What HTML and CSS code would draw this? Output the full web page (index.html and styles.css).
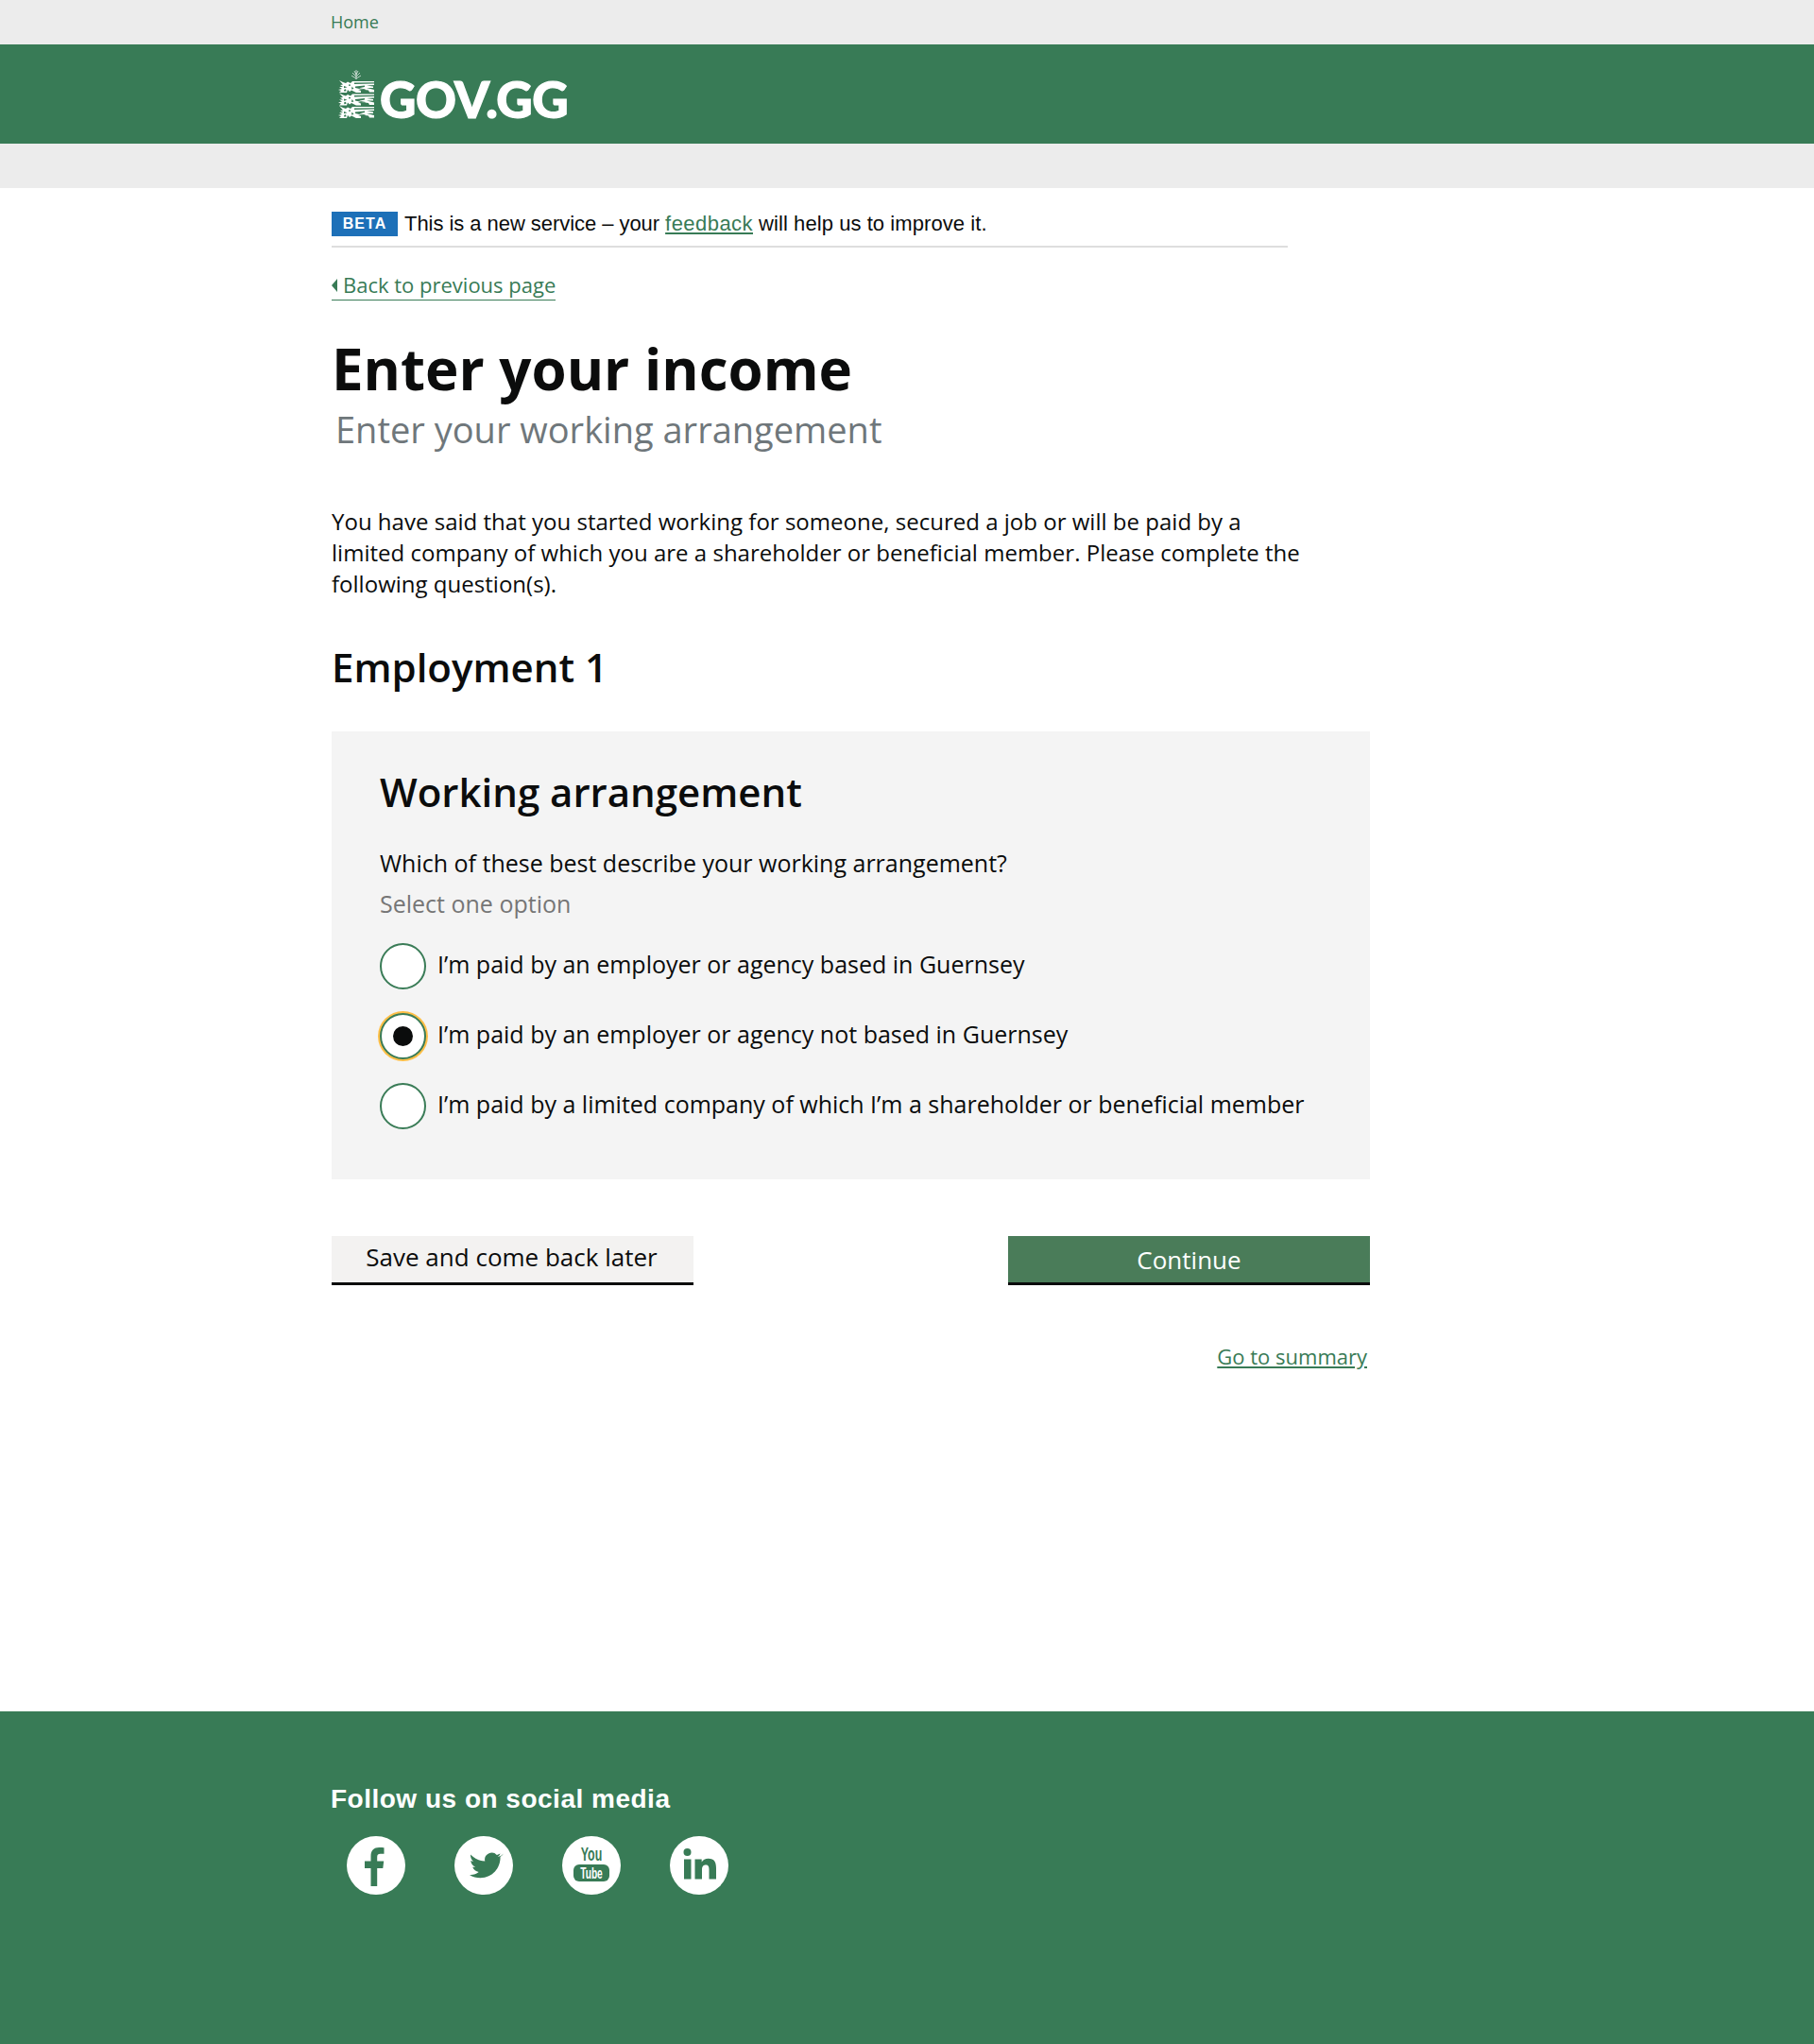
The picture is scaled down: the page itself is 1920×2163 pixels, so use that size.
FILE: index.html
```html
<!DOCTYPE html>
<html lang="en">
<head>
<meta charset="utf-8">
<title>Enter your income</title>
<link rel="stylesheet" href="styles.css">
</head>
<body>
<header>
  <div class="topbar"><div class="wrap"><a class="home" href="#">Home</a></div></div>
  <div class="brand"><div class="wrap brand-in">
    <svg class="crest" viewBox="0 0 38 52" aria-hidden="true">
      <defs>
        <g id="lion">
          <path fill="#fff" d="M1 0L5 2 8 3 10 1.500 13 3 15 1H38V2.200L17 2.500V4L38 3.500V5L30 5.500 37 6.500V8H30L38 10V12.500H33L32 10.500 24 9.500 21 10 24 11V13H19L14 10.500 12 12 10 10 9 13H1L3 11 0 10 4 9 1 7H5L2 5 5 4.500Z"/>
          <path fill="#387b56" d="M11 4.500h2v1.200h-2zM18 6.500l10-1v1.500l-6 1.200 7 1.300-1 .7-10-2.200zM6 6l3.500 1.200L6 8.200zM14.500 6.500l2 2.500-2.500 .5zM6 10l2-.8.5 2-2 .6z"/>
        </g>
      </defs>
      <g stroke="#fff" stroke-width=".8" fill="none" opacity=".85">
        <path d="M19 11V1M19 8l-4-4M19 8l4-4M19 10l-5-3M19 10l5-3M19 6l-2-4M19 6l2-4"/>
      </g>
      <use href="#lion" y="12"/>
      <use href="#lion" y="25.500"/>
      <use href="#lion" y="39"/>
    </svg>
    <span class="wordmark">GOV.GG</span>
  </div></div>
  <div class="subbar"></div>
</header>

<main class="wrap">
  <div class="beta"><span class="tag">BETA</span><span>This is a new service – your <a href="#">feedback</a> <span class="beta-end">will help us to improve it.</span></span></div>
  <a class="back" href="#"><span class="arrow"></span>Back to previous page</a>
  <h1>Enter your income</h1>
  <p class="sub">Enter your working arrangement</p>
  <p class="intro">You have said that you started working for someone, secured a job or will be paid by a limited company of which you are a shareholder or beneficial member. Please complete the following question(s).</p>
  <h2>Employment 1</h2>
  <section class="panel">
    <h3>Working arrangement</h3>
    <p class="q">Which of these best describe your working arrangement?</p>
    <p class="hint">Select one option</p>
    <div class="options">
      <label class="opt"><span class="radio"></span><span class="opt-text">I’m paid by an employer or agency based in Guernsey</span></label>
      <label class="opt"><span class="radio on"></span><span class="opt-text">I’m paid by an employer or agency not based in Guernsey</span></label>
      <label class="opt"><span class="radio"></span><span class="opt-text">I’m paid by a limited company of which I’m a shareholder or beneficial member</span></label>
    </div>
  </section>
  <div class="actions">
    <a class="btn save" href="#">Save and come back later</a>
    <a class="btn go" href="#">Continue</a>
  </div>
  <div class="summary"><a href="#">Go to summary</a></div>
</main>

<footer>
  <div class="wrap">
    <h4>Follow us on social media</h4>
    <div class="social">
      <svg viewBox="0 0 62 62" aria-label="Facebook"><circle cx="31" cy="31" r="31" fill="#fff"/><path fill="#387b56" d="M25.500 53V34h-6.500v-7.500h6.500v-5.500c0-6 3.500-9 8.800-9 2.500 0 4.500.2 5.200.3v6.500h-3.800c-2.900 0-3.500 1.400-3.500 3.400v4.300h7l-.9 7.500h-6.100v19z"/></svg>
      <svg viewBox="0 0 62 62" aria-label="Twitter"><circle cx="31" cy="31" r="31" fill="#fff"/><path fill="#387b56" d="M49 21c-1.300.5-2.200.7-3.300.9 1.200-.7 2.400-2.100 2.800-3.400-1.200.7-2.300 1.100-3.600 1.400a7.400 7.400 0 0 0-12.600 6.700c-6.100-.3-11.300-3-15.300-7.200 0 3 .8 5.300 3 7.300-1.200 0-2-.2-2.800-.6.300 3 2 5.300 5 6.600-1 .2-2 .2-3 0 1.200 3 3.500 4.700 6.500 5.200-2.500 2.300-6 3.300-9.700 3 3.300 2.100 7.200 3.300 11.400 3.300 13.800 0 21.600-11.600 21.100-22.100 1.200-.9 2.400-2 3.500-3.600z"/></svg>
      <svg viewBox="0 0 62 62" aria-label="YouTube"><circle cx="31" cy="31" r="31" fill="#fff"/><rect x="12" y="30" width="38" height="18" rx="6" fill="#387b56"/><text class="yt yt-you" x="31" y="26" text-anchor="middle" transform="translate(31 0) scale(.62 1) translate(-31 0)">You</text><text class="yt yt-tube" x="31" y="45" text-anchor="middle" transform="translate(31 0) scale(.6 1) translate(-31 0)">Tube</text></svg>
      <svg viewBox="0 0 62 62" aria-label="LinkedIn"><circle cx="31" cy="31" r="31" fill="#fff"/><g fill="#387b56"><circle cx="18.500" cy="17" r="4"/><rect x="15" y="24.500" width="7.500" height="21"/><path d="M26.500 24.500h7.200v3c1.200-2.100 3.800-3.700 7-3.700 6.500 0 8.300 4 8.300 10.200v11.500h-7.500V35.500c0-3-.7-5-3.500-5-3 0-4 2.200-4 5v10h-7.500z"/></g></svg>
    </div>
  </div>
</footer>
</body>
</html>
```

FILE: styles.css
```css
* { box-sizing: border-box; }
html, body { margin: 0; padding: 0; }
body {
  min-height: 2163px;
  display: flex;
  flex-direction: column;
  font-family: "Open Sans", sans-serif;
  color: #0b0c0c;
  background: #fff;
}
a { color: #387b56; }
.wrap { width: 1100px; margin-left: 351px; }
.topbar { height: 47px; background: #ececec; }
.home { font-size: 18px; line-height: 47px; text-decoration: none; margin-left: -1px; }
.brand { height: 105px; background: #387b56; }
.brand-in { display: flex; align-items: flex-start; padding: 26px 0 0 7px; }
.crest { width: 38px; height: 52px; }
.wordmark {
  font-family: Lato, sans-serif;
  font-weight: 900;
  font-size: 53px;
  line-height: 52px;
  letter-spacing: -.5px;
  -webkit-text-stroke: 1.200px #fff;
  color: #fff;
  margin: 6px 0 0 6px;
}
.subbar { height: 47px; background: #ececec; }

main { flex: 1; }
.beta {
  width: 1012px;
  display: flex;
  align-items: center;
  gap: 7px;
  height: 63px;
  padding-top: 25px;
  padding-bottom: 10px;
  border-bottom: 2px solid #dedede;
  font-family: "Liberation Sans", sans-serif;
  font-size: 22px;
  letter-spacing: -.05px;
}
.beta a { letter-spacing: .45px; }
.beta-end { letter-spacing: .07px; }
.tag {
  background: #1d70b8;
  color: #fff;
  font-weight: 700;
  font-size: 16px;
  letter-spacing: 1px;
  line-height: 26px;
  width: 70px;
  text-align: center;
}
.back {
  display: inline-flex;
  align-items: center;
  gap: 6px;
  margin-top: 26px;
  font-size: 22px;
  line-height: 29px;
  height: 30px;
  padding-bottom: 2px;
  text-decoration: none;
  border-bottom: 1px solid #3a7c57;
}
.arrow {
  width: 0; height: 0;
  border-top: 7px solid transparent;
  border-bottom: 7px solid transparent;
  border-right: 6px solid #387b56;
}
h1 { margin: 34px 0 0; font-size: 60px; line-height: 76px; font-weight: 700; }
.sub { margin: 0 0 0 4px; font-size: 38px; line-height: 52px; color: #6f777b; }
.intro { margin: 55px 0 0; width: 1040px; font-size: 24px; line-height: 33px; letter-spacing: .015px; }
h2 { margin: 44px 0 0; font-size: 42px; line-height: 56px; font-weight: 600; }
.panel { width: 1099px; height: 474px; margin-top: 40px; padding: 36px 51px 0; background: #f4f4f4; }
h3 { margin: 0; font-size: 42px; line-height: 56px; font-weight: 600; }
.q { margin: 31px 0 0; font-size: 25px; line-height: 33px; }
.hint { margin: 10px 0 0; font-size: 25px; line-height: 33px; color: #767676; }
.options { margin-top: 25px; display: flex; flex-direction: column; gap: 25px; }
.opt { display: flex; align-items: center; gap: 12px; font-size: 25px; height: 49px; }
.opt-text { padding-bottom: 6px; }
.radio {
  flex: none;
  position: relative;
  width: 49px; height: 49px;
  border-radius: 50%;
  border: 2px solid #3a7c57;
  background: #fff;
}
.radio.on { box-shadow: 0 0 0 2px #ffbf47; }
.radio.on::after {
  content: "";
  position: absolute;
  left: 12px; top: 12px;
  width: 21px; height: 21px;
  border-radius: 50%;
  background: #0b0c0c;
}
.actions { width: 1099px; margin-top: 60px; display: flex; justify-content: space-between; }
.btn {
  display: block;
  width: 383px;
  height: 52px;
  text-align: center;
  text-decoration: none;
  font-size: 26px;
  border-bottom: 3px solid #0b0c0c;
}
.save { background: #f3f2f1; color: #0b0c0c; line-height: 44px; padding-right: 2px; }
.go { background: #4a7c59; color: #fff; line-height: 50px; }
.summary { width: 1096px; margin-top: 60px; text-align: right; font-size: 22px; line-height: 30px; }

footer { height: 352px; background: #387b56; color: #fff; }
h4 {
  margin: 0 0 0 -1px;
  padding-top: 75px;
  font-family: "Liberation Sans", sans-serif;
  font-weight: 700;
  font-size: 28px;
  letter-spacing: .5px;
  line-height: 36px;
}
.social { display: flex; gap: 52px; margin: 21px 0 0 16px; }
.social svg { width: 62px; height: 62px; }
.yt { font-family: "Liberation Sans", sans-serif; font-weight: 700; }
.yt-you { font-size: 20px; fill: #387b56; }
.yt-tube { font-size: 17px; fill: #fff; }
```
